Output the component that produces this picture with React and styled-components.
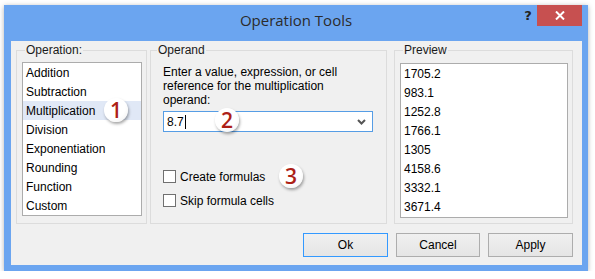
import React from 'react';
import styled, { createGlobalStyle } from 'styled-components';

const GlobalStyle = createGlobalStyle`
  body {
    margin: 0;
    background: #ffffff;
    font-family: 'Liberation Sans', Arial, sans-serif;
    font-size: 12px;
    color: #000;
  }
`;

const Window = styled.div`
  position: relative;
  margin: 5px 0 0 4px;
  width: 584px;
  height: 266px;
  background: #6ba5f0;
  box-shadow: 0 1px 5px rgba(0, 0, 0, 0.3);
  display: flex;
  flex-direction: column;
`;

const TitleBar = styled.div`
  height: 36px;
  display: grid;
  grid-template-columns: 1fr auto 1fr;
  align-items: start;
`;

const Title = styled.div`
  grid-column: 2;
  padding-top: 5px;
  line-height: 20px;
  font-family: 'Open Sans', 'Noto Sans', sans-serif;
  font-size: 15px;
  color: #2b2b2b;
`;

const Controls = styled.div`
  grid-column: 3;
  justify-self: end;
  display: flex;
  align-items: flex-start;
  margin-right: 6px;
`;

const HelpButton = styled.div`
  width: 28px;
  height: 21px;
  line-height: 21px;
  text-align: center;
  font-family: 'DejaVu Sans', sans-serif;
  font-weight: bold;
  font-size: 13px;
  color: #222;
  margin-right: -5px;
`;

const CloseButton = styled.div`
  width: 45px;
  height: 21px;
  background: #c75050;
  color: #fff;
  display: flex;
  align-items: center;
  justify-content: center;
`;

const Client = styled.div`
  flex: 1;
  margin: 0 6px 6px 7px;
  background: #f0f0f0;
  padding: 9px 9px 0 5px;
  display: flex;
  flex-direction: column;
`;

const Groups = styled.div`
  display: flex;
  height: 174px;
`;

const Group = styled.div`
  position: relative;
  box-sizing: border-box;
  width: ${p => p.$w}px;
  margin-left: ${p => p.$gap || 0}px;
  border: 1px solid #dcdcdc;
  display: flex;
  flex-direction: column;
`;

const GroupLabel = styled.div`
  position: absolute;
  top: -8px;
  left: ${p => p.$left}px;
  padding: 0 1px;
  line-height: 15px;
  background: #f0f0f0;
  color: #1a1a1a;
`;

const ListBox = styled.div`
  margin: ${p => p.$top}px 4px 0 5px;
  height: ${p => p.$h}px;
  box-sizing: border-box;
  border: 1px solid #acacac;
  background: #fff;
  overflow: hidden;
`;

const ListItem = styled.div`
  height: 19px;
  line-height: 20px;
  padding-left: 3px;
  background: ${p => (p.$selected ? '#e0e8f6' : 'transparent')};
`;

const OperandBody = styled.div`
  padding: 14px 13px 0 12px;
`;

const Prompt = styled.div`
  line-height: 14px;
`;

const Combo = styled.div`
  margin-top: 4px;
  height: 21px;
  box-sizing: border-box;
  border: 1px solid #569de5;
  background: #fff;
  display: flex;
  align-items: center;
  padding: 0 6px 0 3px;
`;

const ComboValue = styled.span`
  flex: 1;
  display: flex;
  align-items: center;
`;

const Caret = styled.span`
  display: inline-block;
  width: 1px;
  height: 14px;
  background: #000;
  margin-left: 1px;
`;

const CheckRow = styled.label`
  display: flex;
  align-items: center;
  gap: 4px;
  height: 13px;
  margin-top: ${p => p.$top}px;
`;

const Box = styled.span`
  width: 13px;
  height: 13px;
  box-sizing: border-box;
  border: 1px solid #707070;
  background: #fff;
`;

const ButtonRow = styled.div`
  margin-top: 9px;
  display: flex;
  justify-content: flex-end;
  gap: 8px;
`;

const Button = styled.div`
  width: ${p => p.$w}px;
  height: 24px;
  box-sizing: border-box;
  border: 1px solid ${p => (p.$default ? '#3399ff' : '#adadad')};
  background: linear-gradient(#f0f0f0, #e5e5e5);
  display: flex;
  align-items: center;
  justify-content: center;
`;

const Badge = styled.div`
  position: absolute;
  left: ${p => p.$x}px;
  top: ${p => p.$y}px;
  width: 24px;
  height: 24px;
  border-radius: 50%;
  background: radial-gradient(circle at 40% 35%, #ffffff 55%, #ececec 100%);
  box-shadow: 1px 2px 3px rgba(0, 0, 0, 0.35);
  color: #ad1f17;
  font-family: 'Open Sans', sans-serif;
  font-weight: 600;
  font-size: 21px;
  line-height: 24px;
  text-align: center;
`;

const operations = [
  'Addition',
  'Subtraction',
  'Multiplication',
  'Division',
  'Exponentiation',
  'Rounding',
  'Function',
  'Custom',
];

const preview = ['1705.2', '983.1', '1252.8', '1766.1', '1305', '4158.6', '3332.1', '3671.4'];

const App = () => (
  <>
    <GlobalStyle />
    <Window>
      <TitleBar>
        <Title>Operation Tools</Title>
        <Controls>
          <HelpButton>?</HelpButton>
          <CloseButton>
            <svg width='10' height='9' viewBox='0 0 10 9'>
              <path d='M1 0.5 L9 8.5 M9 0.5 L1 8.5' stroke='#fff' strokeWidth='2' />
            </svg>
          </CloseButton>
        </Controls>
      </TitleBar>

      <Client>
        <Groups>
          <Group $w={131}>
            <GroupLabel $left={8}>Operation:</GroupLabel>
            <ListBox $top={11} $h={154}>
              {operations.map(op => (
                <ListItem key={op} $selected={op === 'Multiplication'}>
                  {op}
                </ListItem>
              ))}
            </ListBox>
          </Group>

          <Group $w={237} $gap={3}>
            <GroupLabel $left={6}>Operand</GroupLabel>
            <OperandBody>
              <Prompt>
                Enter a value, expression, or cell
                <br />
                reference for the multiplication
                <br />
                operand:
              </Prompt>
              <Combo>
                <ComboValue>
                  8.7
                  <Caret />
                </ComboValue>
                <svg width='9' height='6' viewBox='0 0 9 6'>
                  <path d='M1 1 L4.5 4.5 L8 1' fill='none' stroke='#555' strokeWidth='2' />
                </svg>
              </Combo>
              <CheckRow $top={38}>
                <Box />
                Create formulas
              </CheckRow>
              <CheckRow $top={11}>
                <Box />
                Skip formula cells
              </CheckRow>
            </OperandBody>
          </Group>

          <Group $w={179} $gap={7}>
            <GroupLabel $left={8}>Preview</GroupLabel>
            <ListBox $top={12} $h={155}>
              {preview.map(v => (
                <ListItem key={v}>{v}</ListItem>
              ))}
            </ListBox>
          </Group>
        </Groups>

        <ButtonRow>
          <Button $w={85} $default>Ok</Button>
          <Button $w={84}>Cancel</Button>
          <Button $w={85}>Apply</Button>
        </ButtonRow>
      </Client>

      <Badge $x={100} $y={93}>1</Badge>
      <Badge $x={211} $y={103}>2</Badge>
      <Badge $x={275} $y={159}>3</Badge>
    </Window>
  </>
);

export default App;
